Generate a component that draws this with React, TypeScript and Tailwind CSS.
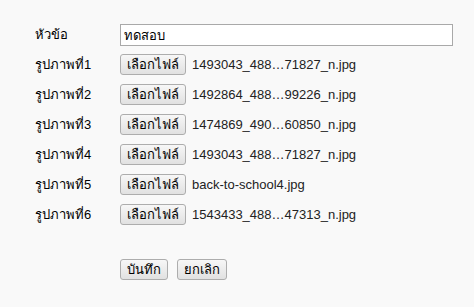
import React from 'react'

const files = [
  '1493043_488…71827_n.jpg',
  '1492864_488…99226_n.jpg',
  '1474869_490…60850_n.jpg',
  '1493043_488…71827_n.jpg',
  'back-to-school4.jpg',
  '1543433_488…47313_n.jpg',
]

const font = { fontFamily: '"Liberation Sans", Tahoma, "Noto Sans", "DejaVu Sans", sans-serif' }

const btn =
  'h-[21px] px-[6px] rounded-[3px] border border-[#adadad] bg-gradient-to-b from-[#f7f7f7] to-[#e1e1e1] text-[13px] leading-none text-black'

export default function App() {
  return (
    <div className="w-[474px] h-[307px] bg-[#f9f9f9] text-[13px] text-[#222]" style={font}>
      <div className="pl-[35px] pt-[24px]">
        <div className="flex items-center h-[22px]">
          <span className="w-[85px] text-black">หัวข้อ</span>
          <input
            defaultValue="ทดสอบ"
            className="w-[333px] h-[22px] border border-[#a9a9a9] bg-white px-[3px] text-[13px] text-black outline-none"
            style={font}
          />
        </div>
        <div className="flex flex-col gap-[9px] mt-[8px]">
          {files.map((f, i) => (
            <div key={i} className="flex items-center h-[21px]">
              <span className="w-[85px] text-black">รูปภาพที่{i + 1}</span>
              <button className={btn} style={font}>เลือกไฟล์</button>
              <span className="ml-[6px]">{f}</span>
            </div>
          ))}
        </div>
        <div className="flex gap-[9px] ml-[85px] mt-[34px]">
          <button className={btn} style={font}>บันทึก</button>
          <button className={btn} style={font}>ยกเลิก</button>
        </div>
      </div>
    </div>
  )
}
